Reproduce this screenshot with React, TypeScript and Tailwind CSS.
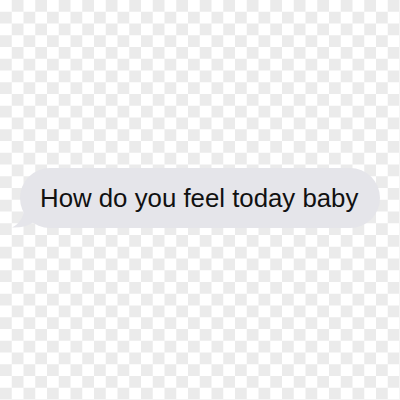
export default function App() {
  return (
    <div className="flex h-[400px] w-[400px] items-center justify-center bg-[repeating-conic-gradient(#ebebeb_0_25%,#ffffff_0_50%)] bg-size-[23.5px_23.5px] pb-1">
      <div className="relative">
        <svg
          className="absolute -left-[10px] bottom-0"
          width="40"
          height="30"
          viewBox="0 0 40 30"
        >
          <path d="M14 0 L14 10 C14 20 8 27 2 29.5 C10 30 18 28 24 24 L30 0 Z" fill="#e5e5ea" />
        </svg>
        <div className="relative flex h-[60px] w-[360px] items-center rounded-full bg-[#e5e5ea] pl-[20px] font-['Liberation_Sans',Arial,sans-serif] text-[25.8px] text-[#111111]">
          How do you feel today baby
        </div>
      </div>
    </div>
  );
}
